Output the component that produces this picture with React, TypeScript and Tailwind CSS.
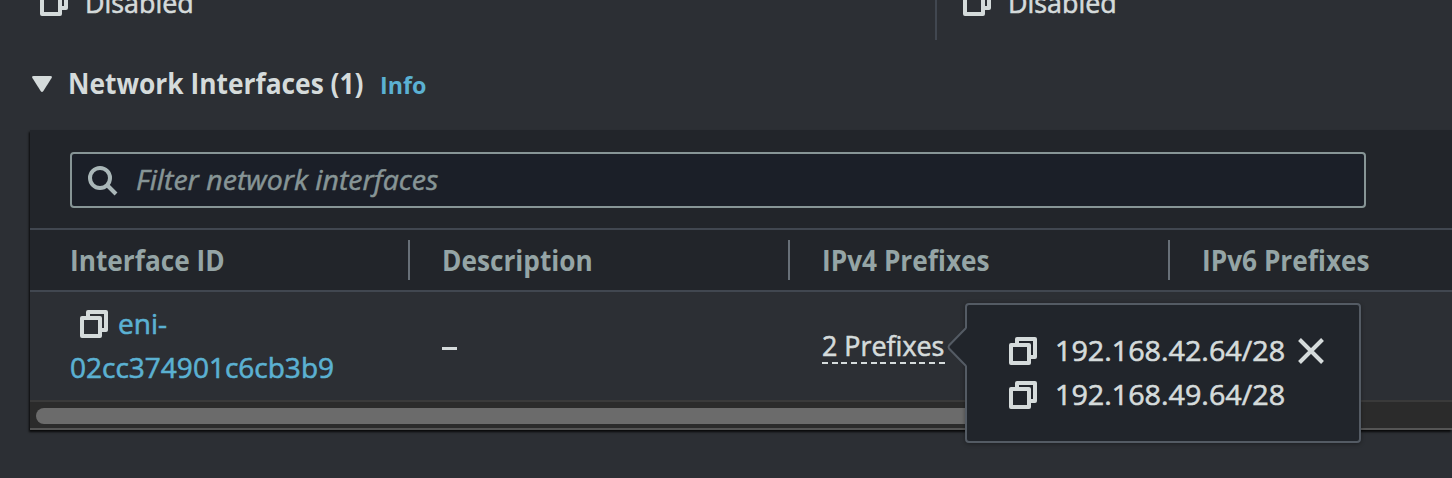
import type { ReactNode } from "react";

function CopyIcon({ className = "" }: { className?: string }) {
  return (
    <svg
      width="28"
      height="28"
      viewBox="0 0 28 28"
      fill="none"
      stroke="#d5dbdb"
      strokeWidth="4"
      strokeLinejoin="round"
      className={`shrink-0 ${className}`}
    >
      <path d="M8 6V2h18v18h-4" />
      <rect x="2" y="8" width="18" height="18" />
    </svg>
  );
}

function CopyField({ className = "" }: { className?: string }) {
  return (
    <div className={`flex h-10 items-center gap-[17px] ${className}`}>
      <CopyIcon />
      <span className="origin-left scale-x-[0.96] [-webkit-text-stroke:0.6px]">Disabled</span>
    </div>
  );
}

function HeaderCell({
  children,
  width = "w-[380px]",
  last = false,
}: {
  children: ReactNode;
  width?: string;
  last?: boolean;
}) {
  return (
    <div className={`flex h-[60px] shrink-0 items-center justify-between ${width}`}>
      <span className="origin-left scale-x-[0.937] font-bold whitespace-nowrap text-[#95a5a6]">
        {children}
      </span>
      {!last && <span className="mr-[32px] h-10 w-0.5 shrink-0 bg-[#687078]" />}
    </div>
  );
}

function PrefixRow({ address }: { address: string }) {
  return (
    <div className="flex h-11 items-center">
      <CopyIcon />
      <span className="ml-[18px] origin-left scale-x-[1.025] pb-[2px] [-webkit-text-stroke:0.6px]">
        {address}
      </span>
    </div>
  );
}

function PrefixPopover() {
  return (
    <div className="absolute top-[11px] left-[935px] h-[140px] w-[396px] rounded-[4px] border-2 border-[#545b64] bg-[#21252b] shadow-[0_1px_4px_rgba(0,0,0,0.35)]">
      <svg width="22" height="42" viewBox="0 0 22 42" className="absolute top-[21px] -left-[21px]">
        <path d="M22 1.5L19.5 3L3 21L19.5 39L22 40.5Z" fill="#21252b" />
        <path d="M20 2L3 19.5Q2 21 3 22.5L20 40" fill="none" stroke="#545b64" strokeWidth="2" />
      </svg>
      <div className="flex pt-6 pl-[42px]">
        <div>
          <PrefixRow address="192.168.42.64/28" />
          <PrefixRow address="192.168.49.64/28" />
        </div>
        <svg
          width="28"
          height="28"
          viewBox="0 0 28 28"
          stroke="#d5dbdb"
          strokeWidth="4"
          className="mt-2 ml-[18px]"
        >
          <path d="M2.5 2.5L25.5 25.5M25.5 2.5L2.5 25.5" />
        </svg>
      </div>
    </div>
  );
}

export default function App() {
  return (
    <div className="h-[478px] w-[1452px] overflow-hidden bg-[#2c2f34] font-['Open_Sans',sans-serif] text-[28px] leading-[44px] text-[#d5dbdb]">
      <div className="flex h-10 pl-10">
        <CopyField className="-mt-[18px] w-[895px]" />
        <div className="w-0.5 bg-[#414750]" />
        <CopyField className="-mt-[18px] ml-[26px]" />
      </div>

      <div className="flex h-[90px] items-baseline pt-[21px] pl-8">
        <svg width="20" height="17" viewBox="0 0 20 17" fill="#d5dbdb" className="mr-4 -translate-y-[1px]">
          <path d="M1.6 0H18.4Q20.6 0 19.6 2L11.2 15.3Q10 16.8 8.8 15.3L0.4 2Q-0.6 0 1.6 0Z" />
        </svg>
        <h2 className="w-[312px] origin-left scale-x-[0.941] font-bold whitespace-nowrap">
          Network Interfaces (1)
        </h2>
        <a className="origin-left scale-x-[0.97] text-[24px] font-bold text-[#5bb1d2]">Info</a>
      </div>

      <section className="relative ml-[30px] h-[300px] w-[1422px] bg-[#22252a] shadow-[-1px_2px_2px_rgba(0,0,0,0.8)]">
        <div className="h-[98px] pt-[22px] pl-10">
          <div className="flex h-14 w-[1296px] items-center rounded-[4px] border-2 border-[#879596] bg-[#1b1f28] pl-4">
            <svg width="30" height="30" viewBox="0 0 30 30" fill="none" stroke="#aab7b8" strokeWidth="4" className="mt-px">
              <circle cx="12" cy="12" r="10" />
              <path d="M19 19L28 28" />
            </svg>
            <span className="ml-[18px] origin-left scale-x-[1.018] pb-[2px] text-[#879596] italic [-webkit-text-stroke:0.5px]">
              Filter network interfaces
            </span>
          </div>
        </div>

        <div className="flex h-16 overflow-hidden border-y-2 border-[#414750] pl-10">
          <HeaderCell width="w-[372px]">Interface ID</HeaderCell>
          <HeaderCell>Description</HeaderCell>
          <HeaderCell>IPv4 Prefixes</HeaderCell>
          <HeaderCell last>IPv6 Prefixes</HeaderCell>
        </div>

        <div className="relative">
          <div className="flex h-[108px] bg-[#2c2f34] pl-10">
            <div className="w-[372px] pt-[9px] text-[#5bb1d2] [-webkit-text-stroke:0.6px]">
              <div className="flex h-11 items-center pl-[10px]">
                <CopyIcon className="mt-[2px]" />
                <span className="ml-[10px]">eni-</span>
              </div>
              <div>02cc374901c6cb3b9</div>
            </div>
            <div className="flex w-[380px] items-center">
              <span className="mt-1 h-[3px] w-[15px] bg-[#d5dbdb]" />
            </div>
            <div className="pt-[36px]">
              <div className="h-[34px] w-[123px] leading-[34px]">
                <span className="inline-block origin-left scale-x-[0.96] whitespace-nowrap [-webkit-text-stroke:0.6px]">
                  2 Prefixes
                </span>
              </div>
              <div className="h-0.5 w-[123px] bg-[repeating-linear-gradient(90deg,#d5dbdb_0_6px,transparent_6px_9.75px)]" />
            </div>
          </div>
          <div className="h-[30px] border-t-2 border-b-2 border-t-[#3a3a3a] border-b-[#555555] bg-[#2b2b2b] pt-[6px] pl-[6px]">
            <div className="h-4 w-[1100px] rounded-full bg-[#6b6b6b]" />
          </div>
          <PrefixPopover />
        </div>
      </section>
    </div>
  );
}
